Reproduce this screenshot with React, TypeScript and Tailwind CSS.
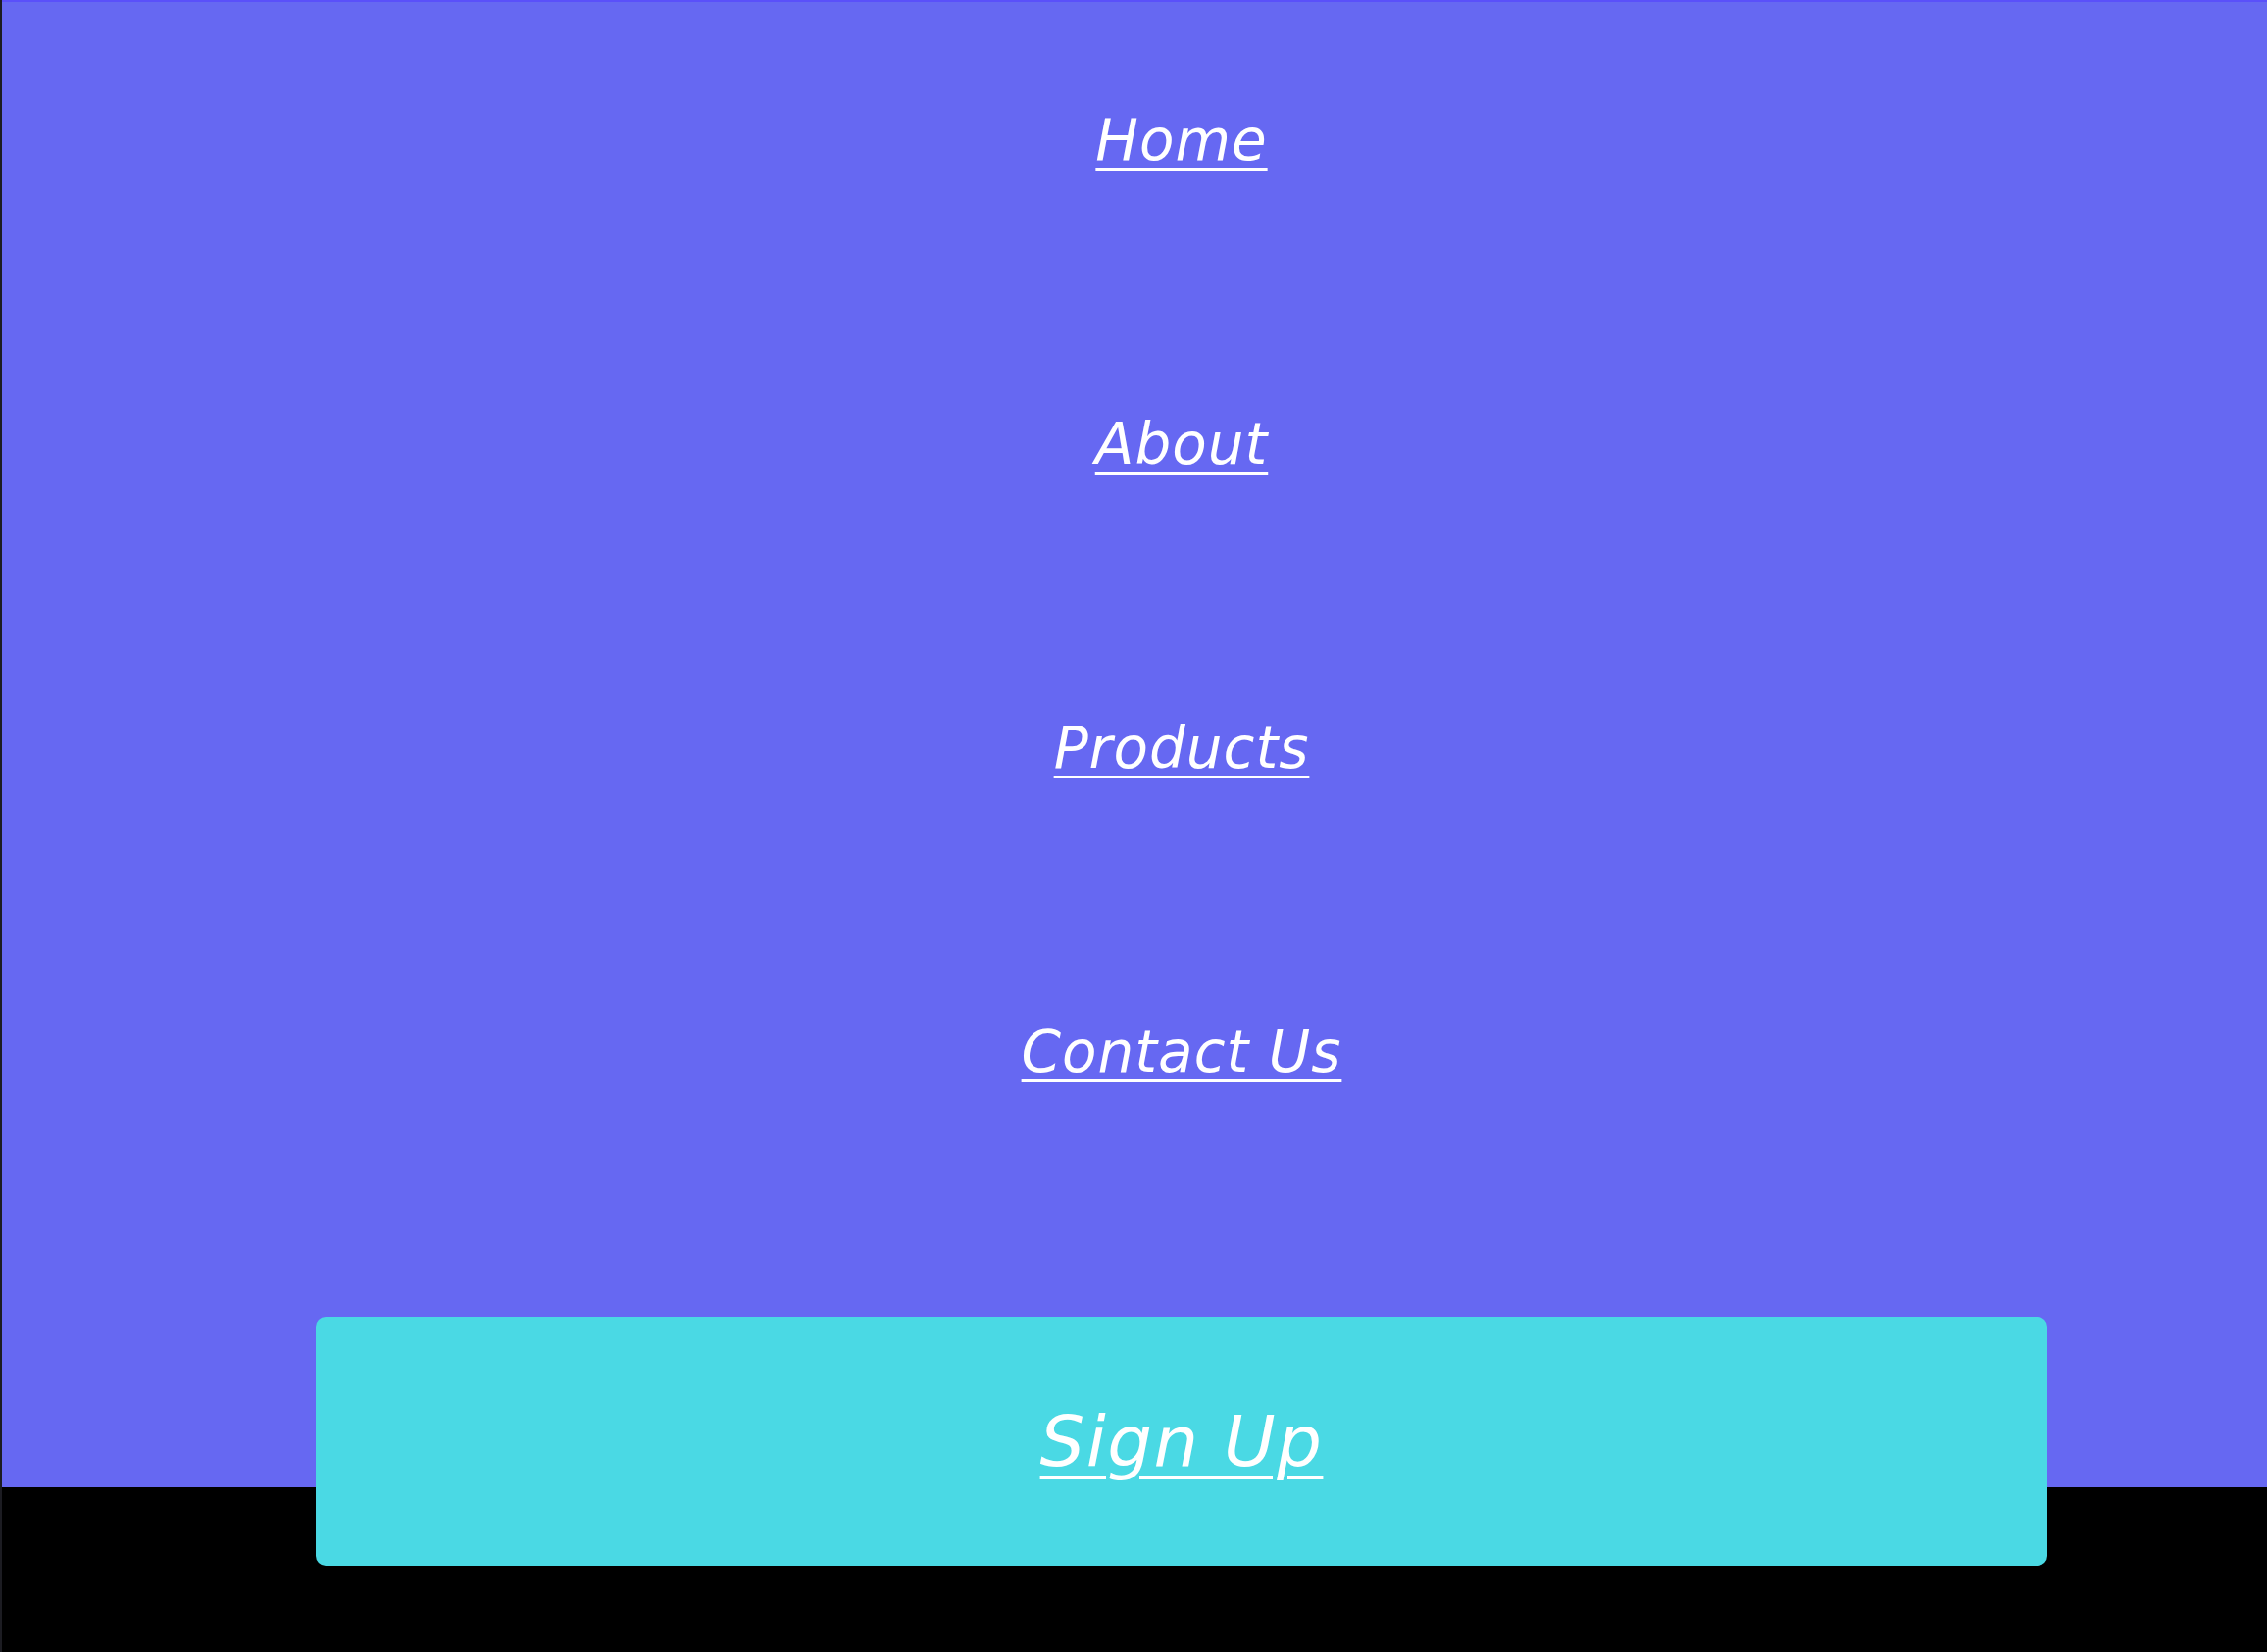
const links = ['Home', 'About', 'Products', 'Contact Us'];

export default function App() {
  return (
    <div
      className="min-h-screen bg-black border-l-2 border-[#1c1c22]"
      style={{ fontFamily: "'DejaVu Sans', 'Open Sans', sans-serif" }}
    >
      <nav className="h-[1517px] bg-[#6668f2] border-t-2 border-[#5a50fa] pl-[96px]">
        <ul className="flex flex-col items-center pt-[106px] gap-[240px]">
          {links.map((l) => (
            <li key={l} className="h-[70px] flex items-center">
              <a
                href="#"
                className="text-white italic text-[58px] leading-[70px] tracking-[1px] underline decoration-[3px] underline-offset-[8px]"
              >
                {l}
              </a>
            </li>
          ))}
        </ul>
        <div className="flex justify-center mt-[235px]">
          <a
            href="#"
            className="w-[1766px] h-[254px] rounded-[10px] bg-[#4ad9e4] flex items-center justify-center text-white italic text-[72px] tracking-[1.5px] underline decoration-[4px] underline-offset-[10px]"
          >
            Sign Up
          </a>
        </div>
      </nav>
    </div>
  );
}
